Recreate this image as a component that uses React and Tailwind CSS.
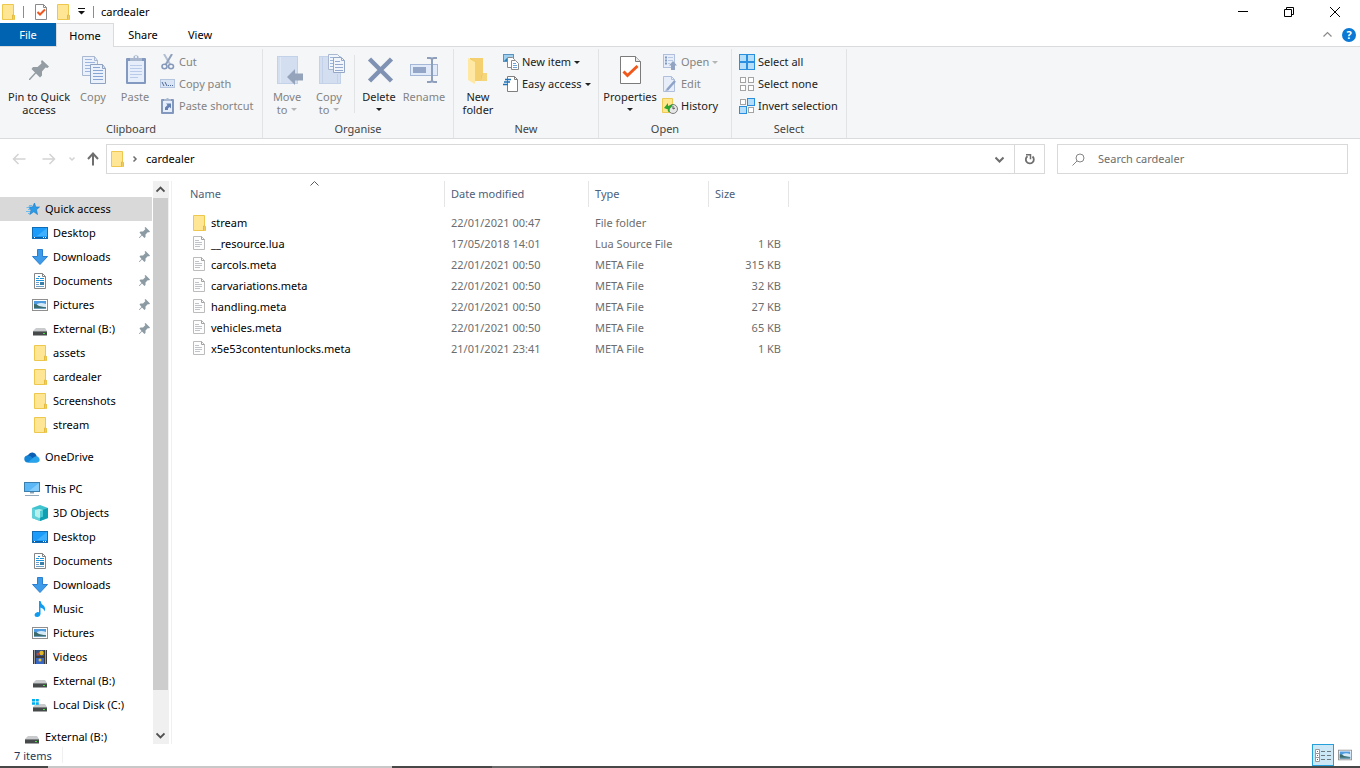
import { useState } from 'react';
import clsx from 'clsx';

/* ---------- icons ---------- */

const Svg = ({ size = 16, className, children }) => (
  <svg width={size} height={size} viewBox={`0 0 ${size} ${size}`} fill="none" aria-hidden="true" className={clsx('shrink-0', className)}>
    {children}
  </svg>
);

const FolderIcon = () => (
  <Svg>
    <path d="M2.500.5h11v11h1v4h-12z" fill="#ffe694" stroke="#edc84c" />
    <path d="M12.500 15.500v-4.500h1.500v4.500" fill="#ffe07a" stroke="#e3bb41" />
  </Svg>
);

const CheckDocIcon = () => (
  <Svg>
    <path d="M2.500.5h8l3 3v12h-11z" fill="#fff" stroke="#8a8a8a" />
    <path d="M10.500.5v3h3" stroke="#8a8a8a" />
    <path d="M4.500 8l2.500 2.500 5-5" stroke="#f0561d" strokeWidth="2" />
  </Svg>
);

const FileIcon = () => (
  <Svg>
    <path d="M2.500.5h8l3 3v10h-11z" fill="#fdfdfd" stroke="#bcbcbc" />
    <path d="M10.500.5v3h3" stroke="#a2a2a2" />
    <path d="M4 4.500h4M4 6.500h7M4 8.500h7M4 10.500h5" stroke="#c0c4c8" />
  </Svg>
);

const PinIcon = () => (
  <Svg size={32}>
    <path d="M19 6L26 12.500L24.500 14L22.500 13.500L19 17.500V21.500L17 23.500L13 19.500L7 26H6V25L12 18.500L8.500 15L10 13H14.500L18.500 9.500L18 7.500Z" fill="#939da3" />
  </Svg>
);

const SmallPinIcon = () => (
  <Svg className="text-[#8c9aa3]">
    <path d="M9.500 2L14 6.500L13 7.500L12 7L9.500 9.500V12L8.500 13L6 10.500L3.500 13H3V12.500L5.500 10L3.500 7.500L4.500 6.500H7L9.500 4L8.500 3Z" fill="currentColor" />
  </Svg>
);

const CopyIcon = () => (
  <Svg size={32}>
    <path d="M5.500 2.500h12l3 4v15h-15z" fill="#eaf1fb" stroke="#a9b8d0" />
    <path d="M17.500 2.500v4h3" stroke="#a9b8d0" />
    <path d="M8 5.500h7M8 8.500h10M8 11.500h5M8 14.500h5M8 17.500h5" stroke="#9db5dc" />
    <path d="M13.500 10.500h12l3 4v15h-15z" fill="#eaf1fb" stroke="#8fa2c2" />
    <path d="M25.500 10.500v4h3" stroke="#8fa2c2" />
    <path d="M16 13.500h7M16 16.500h10M16 19.500h10M16 22.500h10M16 25.500h10" stroke="#88a4d3" />
  </Svg>
);

const PasteIcon = () => (
  <Svg size={32}>
    <rect x="7" y="4" width="20" height="26" rx="1" fill="#8399c0" />
    <rect x="9" y="7" width="16" height="21" fill="#e6eefb" />
    <path d="M11 11.500h12M11 14.500h12M11 17.500h12M11 20.500h12M11 23.500h8" stroke="#b9cbe9" />
    <path d="M11 7V4h3.500V2.500Q17 0 19.500 2.500V4H23v3z" fill="#a9b7ce" />
    <rect x="16" y="2" width="2" height="2" fill="#e6eefb" />
  </Svg>
);

const MoveIcon = () => (
  <Svg size={32}>
    <rect x="6.500" y="2.500" width="20" height="27" fill="#d3dff0" stroke="#c3d2e8" />
    <path d="M9.500 3v26" stroke="#dfe8f5" />
    <path d="M16 23L24 15V19.500H32V26.500H24V31Z" fill="#95a3bb" />
  </Svg>
);

const CopyToIcon = () => (
  <Svg size={32}>
    <rect x="6.500" y="2.500" width="21" height="27" fill="#d3dff0" stroke="#c3d2e8" />
    <path d="M9.500 3v26M24.500 20v9" stroke="#c3d2e8" />
    <path d="M15.500.5h9l3 3v12h-12z" fill="#f1f6fd" stroke="#a9b8d0" />
    <path d="M17 3.500h6M17 6.500h3M17 9.500h3M17 12.500h3" stroke="#9db5dc" />
    <path d="M20.500 3.500h8l3 3v12h-11z" fill="#f1f6fd" stroke="#95a7c5" />
    <path d="M28.500 3.500v3h3M22 7.500h5M22 10.500h8M22 13.500h8M22 16.500h8" stroke="#95aace" />
  </Svg>
);

const DeleteIcon = () => (
  <Svg size={32}>
    <path d="M6.500 5L28.500 27M28.500 5L6.500 27" stroke="#8092b3" strokeWidth="4.500" />
  </Svg>
);

const RenameIcon = () => (
  <Svg size={32}>
    <rect x="2.500" y="10.500" width="27" height="11" fill="#e1eaf8" stroke="#a5b7d6" />
    <rect x="5" y="13" width="13" height="6" fill="#93a6c8" />
    <path d="M19 4h3q2 0 2 2v20q0 2-2 2h-3M29 4h-3q-2 0-2 2M29 28h-3q-2 0-2-2" stroke="#8e9fbc" strokeWidth="2" />
  </Svg>
);

const NewFolderIcon = () => (
  <Svg size={32}>
    <path d="M8 4H21V19H25V27H8Z" fill="#f0c75f" />
    <path d="M21 19h4v8h-6z" fill="#f6d67b" />
    <path d="M8 4h13v15l-2 3v5h-6V8z" fill="#f5d070" />
    <path d="M6 4L13 8V30L6 26Z" fill="#ffe8a3" />
  </Svg>
);

const PropertiesIcon = () => (
  <Svg size={32}>
    <path d="M6.500 2.500h15l5 5v22h-20z" fill="#fff" stroke="#7b7b7b" />
    <path d="M21.500 2.500v5h5" fill="#e8e8e8" stroke="#7b7b7b" />
    <path d="M9.500 17.500L13.500 21.500L23.500 12" stroke="#f0591b" strokeWidth="3" />
  </Svg>
);

const CutIcon = () => (
  <Svg>
    <path d="M4 0L10.500 11" stroke="#b3bfd2" strokeWidth="2" />
    <path d="M12 0L5.500 11" stroke="#8fa0bd" strokeWidth="2" />
    <ellipse cx="4.500" cy="12.500" rx="2.500" ry="2.200" stroke="#8699bb" strokeWidth="1.600" />
    <ellipse cx="11" cy="12.500" rx="2.500" ry="2.200" stroke="#8699bb" strokeWidth="1.600" />
  </Svg>
);

const CopyPathIcon = () => (
  <Svg>
    <rect x=".5" y="3.500" width="14" height="8" fill="#d9e4f4" stroke="#b5c5df" />
    <path d="M2 6l2 4M5 6l2 4" stroke="#4f6999" />
    <path d="M8 9.500h1M10 9.500h1M12 9.500h1" stroke="#4f6999" />
  </Svg>
);

const ShortcutIcon = () => (
  <Svg>
    <rect x="1" y="1" width="13" height="15" rx="1" fill="#8298bf" />
    <rect x="3" y="3" width="9" height="11" fill="#e6eefb" />
    <path d="M4 3V1h2q1.500-2 3 0h2v2z" fill="#a9b7ce" />
    <path d="M5 12V9.500l2.500-2.500L6 5.500h5v5L9.500 9L8 10.500V12z" fill="#6580b3" />
  </Svg>
);

const NewItemIcon = () => (
  <Svg>
    <rect x=".5" y=".5" width="10" height="7" fill="#9fd0f0" stroke="#5b93bd" />
    <path d="M1 7l3-3 3 3z" fill="#2f7db5" />
    <path d="M4.500 3.500h5l2 2v8h-7z" fill="#fff" stroke="#8a8a8a" />
    <path d="M8.500 6.500h4l3 3v6h-7z" fill="#fff" stroke="#8a8a8a" />
    <path d="M10 9.500h3M10 11.500h4M10 13.500h4" stroke="#6da3d6" />
  </Svg>
);

const EasyAccessIcon = () => (
  <Svg>
    <path d="M4.500.5h7l3 3v12h-10V.5" fill="#fff" stroke="#7f7f7f" />
    <path d="M11.500.5v3h3" stroke="#7f7f7f" />
    <path d="M2 3.500h6M1 6h6M0 8.500h5" stroke="#1f71b8" strokeWidth="1.500" />
  </Svg>
);

const OpenIcon = () => (
  <Svg>
    <rect x="1.500" y=".5" width="11" height="13" fill="#e7eefa" stroke="#b0c0dc" />
    <path d="M3 3.500h2M3 6.500h2M3 9.500h2" stroke="#7f98c4" strokeWidth="2" />
    <path d="M6 3.500h5M6 6.500h5M6 9.500h2" stroke="#b9c9e4" />
    <path d="M11 7L15 11.500H13V16H9V11.500H7Z" fill="#92a4c2" />
  </Svg>
);

const EditIcon = () => (
  <Svg>
    <path d="M1.500.5h8l3 3v12h-11z" fill="#e7eefa" stroke="#b0c0dc" />
    <path d="M9.500.5v3h3" stroke="#b0c0dc" />
    <path d="M5 14L13 5" stroke="#8da2c6" strokeWidth="2.500" />
    <path d="M3 16l1-3 2 2z" fill="#a9b9d4" />
  </Svg>
);

const HistoryIcon = () => (
  <Svg>
    <path d="M.5.500h10v14H.5z" fill="#ffe68f" stroke="#edcb55" />
    <circle cx="11" cy="11" r="4.500" fill="#e6e6e6" stroke="#7d7d7d" />
    <path d="M11 8v3l2-1" stroke="#555" />
    <path d="M2 10l4-5v3q3-1 5-2-1 3-3 4.500-1 1.500 0 4-3-1-2-3z" fill="#2da52d" />
  </Svg>
);

const Square = ({ x, y, on }) => (
  <rect x={x + 0.5} y={y + 0.5} width={on ? 7 : 5} height={on ? 7 : 5} fill={on ? '#b5defa' : '#fff'} stroke={on ? '#2b8fe0' : '#a3a3a3'} />
);

const SelectAllIcon = () => (
  <Svg>
    <Square x={0} y={0} on /><Square x={8} y={0} on />
    <Square x={0} y={8} on /><Square x={8} y={8} on />
    <path d="M8 0v16M0 8h16" stroke="#2b8fe0" strokeWidth="2" />
  </Svg>
);

const SelectNoneIcon = () => (
  <Svg>
    <Square x={1} y={1} /><Square x={9} y={1} />
    <Square x={1} y={9} /><Square x={9} y={9} />
  </Svg>
);

const InvertIcon = () => (
  <Svg>
    <Square x={1} y={1} /><Square x={8} y={0} on />
    <Square x={0} y={8} on /><Square x={9} y={9} />
  </Svg>
);

const StarIcon = () => (
  <Svg>
    <path d="M10.500 2L11.800 6H15.500L12.500 8.700L13.500 13.500L9.800 10.800L5.800 13.500L7 9L4.500 6H8.500Z" fill="#2b9be8" stroke="#1a78c2" strokeWidth=".6" />
    <path d="M5 4.500h3M2.500 6.500h3M4 8.500h2M2 10.500h4M4 12.500h2" stroke="#6cbcf0" />
  </Svg>
);

const DesktopIcon = () => (
  <Svg>
    <rect x=".5" y="2.500" width="15" height="11" fill="#1b9cfb" stroke="#0f6db8" />
    <path d="M15 3v8L5 11z" fill="#3eb0ff" />
    <path d="M1 12.500h14" stroke="#0a5ea3" />
    <path d="M2 12.500h1M11 12.500h1M13 12.500h1" stroke="#fff" />
  </Svg>
);

const DownloadIcon = () => (
  <Svg>
    <path d="M5.500.5h5v7h5L8 15.500.5 7.500h5z" fill="#3d9be9" stroke="#2b7fd0" />
  </Svg>
);

const DocumentIcon = () => (
  <Svg>
    <path d="M2.500.5h8l3 3v12h-11z" fill="#fff" stroke="#858585" />
    <path d="M10.500.5v3h3" stroke="#858585" />
    <path d="M4 5.500h3M6 3.500h2M8 5.500h4M4 7.500h8" stroke="#1d94dc" />
    <path d="M4 9.500h3M4 11.500h3M4 13.500h8" stroke="#6b9fc8" />
    <rect x="8" y="9" width="4" height="3" fill="#3d7ea8" />
  </Svg>
);

const PictureIcon = ({ size }) => (
  <svg width={size || 16} height={size || 16} viewBox="0 0 16 16" fill="none" aria-hidden="true" className="shrink-0">
    <rect x=".5" y="2.500" width="15" height="11" fill="#fff" stroke="#8f8f8f" />
    <rect x="2" y="4" width="12" height="8" fill="#4f9be0" />
    <path d="M5 7q4-2 9 0v3H5z" fill="#d5e9f7" />
    <path d="M2 7q3 0 5 2l7 1.500V12H2z" fill="#3b6b6c" />
    <path d="M2 11h12v1H2z" fill="#6ea0bd" />
  </svg>
);

const Disk = () => (
  <>
    <path d="M4 7h9l2 3H1z" fill="#c9cbcc" />
    <path d="M1 10h14v4.500H1z" fill="#474a4b" />
    <path d="M1 10.500h14" stroke="#7f8283" />
    <rect x="11" y="12" width="2" height="1" fill="#44e044" />
  </>
);

const DriveIcon = () => <Svg><Disk /></Svg>;

const LocalDiskIcon = () => (
  <Svg>
    <Disk />
    <path d="M0 2h3v2.500H0zM3.800 2h3v2.500h-3zM0 5.300h3v2.500H0zM3.800 5.300h3v2.500h-3z" fill="#00adef" />
  </Svg>
);

const CloudIcon = () => (
  <Svg>
    <path d="M4 12a4 4 0 0 1 .5-6.500A4.500 4.500 0 0 1 12.500 6.500L13 13z" fill="#0a5fb4" />
    <path d="M3.500 13.500A3.500 3.500 0 0 1 3 6.600Q6 6 8 8.500L13 13.500z" fill="#1485d6" />
    <path d="M4 13.500L10 8Q14 6 15 9q2 3-1.500 4.500z" fill="#27a4ec" />
  </Svg>
);

const PcIcon = () => (
  <Svg>
    <rect x=".5" y="1.500" width="15" height="9" fill="#5bb7f5" stroke="#3a7fae" />
    <path d="M15 2v8H5z" fill="#83ccfb" />
    <path d="M6 11h4v1.500H6z" fill="#8fa4b2" />
    <path d="M1 14.500h14" stroke="#93a9ba" />
  </Svg>
);

const CubeIcon = () => (
  <Svg>
    <path d="M0 3L8 0l8 3v10l-8 3-8-3z" fill="#3fc3cf" />
    <path d="M0 3l8 3v10l-8-3z" fill="#62d0d8" />
    <path d="M16 3L8 6v10l8-3z" fill="#0f9fb3" />
    <path d="M3 5l4-1 4 1v6l-4 2-4-2z" fill="#b9f0ee" />
    <path d="M8 6l3-1v6.500l-3 1z" fill="#49ccd5" />
  </Svg>
);

const MusicIcon = () => (
  <Svg>
    <path d="M7 0h1.500q.5 3 3 4.500 2.500 2.500 1 6-.5-3-4-4V13q-.5 3-3.500 3-2.500 0-2.500-2t3-3q1 0 1.500.3z" fill="#0f9bef" />
  </Svg>
);

const VideoIcon = () => (
  <Svg>
    <rect x="1" y="1" width="14" height="14" fill="#3a3a3a" />
    <path d="M2.500 1.500v13M13.500 1.500v13" stroke="#fff" strokeDasharray="1 1" />
    <rect x="4" y="1" width="8" height="6" fill="#37507e" />
    <rect x="4" y="9" width="8" height="6" fill="#3767c4" />
    <circle cx="9.500" cy="4" r="2.200" fill="#e0b92b" />
    <circle cx="6" cy="5" r="1.500" fill="#c0472f" />
    <circle cx="8" cy="11" r="1.500" fill="#e8c53a" />
  </Svg>
);

const DetailsIcon = () => (
  <Svg>
    <path d="M.5 2.500h4v12h-4zM0 6.500h5M0 10.500h5" fill="#fff" stroke="#9a9a9a" />
    <path d="M2 4.500h1" stroke="#2f9b3f" />
    <path d="M2 8.500h1" stroke="#2f6fd0" />
    <path d="M2 12.500h1" stroke="#c8322b" />
    <path d="M6 4.500h4M12 4.500h4M6 8.500h4M12 8.500h4M6 12.500h4M12 12.500h4" stroke="#6f7a80" />
  </Svg>
);

const Caret = ({ className }) => (
  <svg width="6" height="3" viewBox="0 0 6 3" aria-hidden="true" className={clsx('shrink-0', className)}>
    <path d="M0 0h6L3 3z" fill="currentColor" />
  </svg>
);

const Chevron = ({ d, className, width = 1.5 }) => (
  <svg width="9" height="9" viewBox="0 0 9 9" fill="none" aria-hidden="true" className={clsx('shrink-0', className)}>
    <path d={d} stroke="currentColor" strokeWidth={width} />
  </svg>
);

const UP = 'M.5 6.500l4-4 4 4';
const DOWN = 'M.5 2.500l4 4 4-4';

/* ---------- ribbon ---------- */

const Group = ({ label, className, children }) => (
  <section className={clsx('mt-0.5 flex shrink-0 flex-col border-r border-[#e2e3e4] pt-0.5 pb-px', className)}>
    <div className="flex h-[66px] pl-[3px]">{children}</div>
    <h2 className="mt-1 h-4 text-center leading-4 text-[#444]">{label}</h2>
  </section>
);

const BigButton = ({ icon: Icon, lines, caret, disabled, className }) => (
  <button disabled={disabled} className={clsx('flex flex-col items-center pt-[3px] leading-[13px] whitespace-nowrap', disabled ? 'text-[#838383]' : 'text-[#222]', className)}>
    <Icon />
    <span className="mt-1">{lines[0]}</span>
    {(lines[1] || caret) && (
      <span className="flex h-[13px] items-center gap-1">
        {lines[1]}
        {caret && <Caret className={disabled && 'text-[#b5b5b5]'} />}
      </span>
    )}
  </button>
);

const SmallButton = ({ icon: Icon, label, caret, disabled }) => (
  <button disabled={disabled} className={clsx('flex h-[22px] items-center gap-[3px] whitespace-nowrap', disabled ? 'text-[#838383]' : 'text-[#222]')}>
    <Icon />
    {label}
    {caret && <Caret className={disabled && 'text-[#b5b5b5]'} />}
  </button>
);

const Ribbon = () => (
  <div className="flex border-b border-[#dadbdc] bg-[#f5f6f7]">
    <Group label="Clipboard" className="w-[263px]">
      <BigButton icon={PinIcon} lines={['Pin to Quick', 'access']} className="w-18" />
      <BigButton icon={CopyIcon} lines={['Copy']} disabled className="w-9" />
      <BigButton icon={PasteIcon} lines={['Paste']} disabled className="w-12" />
      <div className="ml-px">
        <SmallButton icon={CutIcon} label="Cut" disabled />
        <SmallButton icon={CopyPathIcon} label="Copy path" disabled />
        <SmallButton icon={ShortcutIcon} label="Paste shortcut" disabled />
      </div>
    </Group>
    <Group label="Organise" className="w-[191px]">
      <BigButton icon={MoveIcon} lines={['Move', 'to']} caret disabled className="w-[42px]" />
      <BigButton icon={CopyToIcon} lines={['Copy', 'to']} caret disabled className="w-[42px]" />
      <div className="my-1 mr-[3px] ml-1 border-l border-[#e2e3e4]" />
      <BigButton icon={DeleteIcon} lines={['Delete']} caret className="w-[42px]" />
      <BigButton icon={RenameIcon} lines={['Rename']} disabled className="w-12" />
    </Group>
    <Group label="New" className="w-[145px]">
      <BigButton icon={NewFolderIcon} lines={['New', 'folder']} className="w-[42px]" />
      <div className="ml-1">
        <SmallButton icon={NewItemIcon} label="New item" caret />
        <SmallButton icon={EasyAccessIcon} label="Easy access" caret />
      </div>
    </Group>
    <Group label="Open" className="w-[133px]">
      <BigButton icon={PropertiesIcon} lines={['Properties']} caret className="w-14" />
      <div className="ml-1">
        <SmallButton icon={OpenIcon} label="Open" caret disabled />
        <SmallButton icon={EditIcon} label="Edit" disabled />
        <SmallButton icon={HistoryIcon} label="History" />
      </div>
    </Group>
    <Group label="Select" className="w-[115px]">
      <div className="ml-1">
        <SmallButton icon={SelectAllIcon} label="Select all" />
        <SmallButton icon={SelectNoneIcon} label="Select none" />
        <SmallButton icon={InvertIcon} label="Invert selection" />
      </div>
    </Group>
  </div>
);

/* ---------- navigation pane ---------- */

const TREE = [
  {
    label: 'Quick access', icon: StarIcon,
    items: [
      { label: 'Desktop', icon: DesktopIcon, pinned: true },
      { label: 'Downloads', icon: DownloadIcon, pinned: true },
      { label: 'Documents', icon: DocumentIcon, pinned: true },
      { label: 'Pictures', icon: PictureIcon, pinned: true },
      { label: 'External (B:)', icon: DriveIcon, pinned: true },
      { label: 'assets', icon: FolderIcon },
      { label: 'cardealer', icon: FolderIcon },
      { label: 'Screenshots', icon: FolderIcon },
      { label: 'stream', icon: FolderIcon },
    ],
  },
  { label: 'OneDrive', icon: CloudIcon, items: [] },
  {
    label: 'This PC', icon: PcIcon,
    items: [
      { label: '3D Objects', icon: CubeIcon },
      { label: 'Desktop', icon: DesktopIcon },
      { label: 'Documents', icon: DocumentIcon },
      { label: 'Downloads', icon: DownloadIcon },
      { label: 'Music', icon: MusicIcon },
      { label: 'Pictures', icon: PictureIcon },
      { label: 'Videos', icon: VideoIcon },
      { label: 'External (B:)', icon: DriveIcon },
      { label: 'Local Disk (C:)', icon: LocalDiskIcon },
    ],
  },
  { label: 'External (B:)', icon: DriveIcon, items: [] },
];

const NavItem = ({ item, child, selected, onClick }) => {
  const Icon = item.icon;
  return (
    <button
      onClick={onClick}
      className={clsx('flex h-6 w-full shrink-0 items-center gap-[5px] whitespace-nowrap', child ? 'pl-8' : 'pl-6', selected && 'bg-[#d9d9d9]')}
    >
      <Icon />
      <span className="flex-1 text-left">{item.label}</span>
      {item.pinned && <SmallPinIcon />}
    </button>
  );
};

const NavPane = () => {
  const [selected, setSelected] = useState('Quick access');

  return (
    <nav className="flex w-[172px] shrink-0 border-r border-[#f0f0f0]">
      <div className="flex w-[153px] flex-col gap-2 overflow-hidden pt-4 pr-px">
        {TREE.map(root => (
          <div key={root.label} className="shrink-0">
            <NavItem item={root} selected={selected === root.label} onClick={() => setSelected(root.label)} />
            {root.items.map(item => (
              <NavItem
                key={item.label}
                item={item}
                child
                selected={selected === `${root.label}/${item.label}`}
                onClick={() => setSelected(`${root.label}/${item.label}`)}
              />
            ))}
          </div>
        ))}
      </div>
      <div className="flex w-4 flex-col bg-[#f0f0f0] pr-px text-[#505050]">
        <button aria-label="Scroll up" className="flex h-[17px] items-center justify-center"><Chevron d={UP} width={1.8} /></button>
        <div className="flex flex-1 flex-col">
          <div className="h-[93%] bg-[#cdcdcd]" />
        </div>
        <button aria-label="Scroll down" className="flex h-[17px] items-center justify-center"><Chevron d={DOWN} width={1.8} /></button>
      </div>
    </nav>
  );
};

/* ---------- file list ---------- */

const FILES = [
  { name: 'stream', date: '22/01/2021 00:47', type: 'File folder', size: '', folder: true },
  { name: '__resource.lua', date: '17/05/2018 14:01', type: 'Lua Source File', size: '1 KB' },
  { name: 'carcols.meta', date: '22/01/2021 00:50', type: 'META File', size: '315 KB' },
  { name: 'carvariations.meta', date: '22/01/2021 00:50', type: 'META File', size: '32 KB' },
  { name: 'handling.meta', date: '22/01/2021 00:50', type: 'META File', size: '27 KB' },
  { name: 'vehicles.meta', date: '22/01/2021 00:50', type: 'META File', size: '65 KB' },
  { name: 'x5e53contentunlocks.meta', date: '21/01/2021 23:41', type: 'META File', size: '1 KB' },
];

const FileList = () => (
  <main className="flex-1 overflow-hidden">
    <table className="w-[617px] table-fixed border-separate border-spacing-0">
      <thead>
        <tr className="h-[26px] text-left text-[#4c607a] *:border-r *:border-[#e5e5e5] *:p-0 *:font-normal">
          <th className="relative w-[273px]">
            <span className="pl-[18px]">Name</span>
            <Chevron d={UP} width={1} className="absolute -top-0.5 left-[138px] text-[#5a5a5a]" />
          </th>
          <th className="w-36"><span className="pl-1.5">Date modified</span></th>
          <th className="w-30"><span className="pl-1.5">Type</span></th>
          <th className="w-20"><span className="pl-1.5">Size</span></th>
        </tr>
      </thead>
      <tbody className="text-[#6d6d6d] before:block before:h-[5px]">
        {FILES.map(file => (
          <tr key={file.name} className="h-[21px] *:py-0">
            <td className="pr-0 pl-[19px]">
              <span className="flex items-center gap-1 text-black">
                {file.folder ? <FolderIcon /> : <FileIcon />}
                {file.name}
              </span>
            </td>
            <td className="pr-0 pl-1.5">{file.date}</td>
            <td className="pr-0 pl-1.5">{file.type}</td>
            <td className="pr-2 pl-0 text-right">{file.size}</td>
          </tr>
        ))}
      </tbody>
    </table>
  </main>
);

/* ---------- window ---------- */

const TitleBar = () => (
  <header className="flex h-[23px] items-center">
    <FolderIcon />
    <div className="mx-[7px] h-3 border-l border-[#8c8c8c]" />
    <button aria-label="Properties" className="ml-[2px]"><CheckDocIcon /></button>
    <button aria-label="New folder" className="ml-[6px]"><FolderIcon /></button>
    <button aria-label="Customise Quick Access Toolbar" className="ml-[7px]">
      <svg width="7" height="7" viewBox="0 0 7 7" aria-hidden="true"><path d="M0 0h7v1H0zM0 3h7L3.500 6.500z" fill="#111" /></svg>
    </button>
    <div className="mr-[7px] ml-2 h-3 border-l border-[#8c8c8c]" />
    <h1 className="flex-1">cardealer</h1>
    <div className="flex pr-0.5 *:flex *:h-[22px] *:w-[46px] *:items-center *:justify-center">
      <button aria-label="Minimise">
        <Svg size={12}><path d="M1 5.500h10" stroke="#000" /></Svg>
      </button>
      <button aria-label="Restore">
        <Svg size={12}><path d="M1.500 3.500h7v7h-7zM3.500 3.500v-2h7v7h-2" stroke="#000" /></Svg>
      </button>
      <button aria-label="Close">
        <Svg size={12}><path d="M1 1l10 10M11 1L1 11" stroke="#000" /></Svg>
      </button>
    </div>
  </header>
);

const Tabs = () => (
  <div className="flex h-6 items-stretch border-b border-[#dadbdc]">
    <button className="w-14 bg-[#0063b1] text-white">File</button>
    <button className="-mb-px w-[58px] border border-b-0 border-[#dadbdc] bg-[#f5f6f7]">Home</button>
    <button className="w-[58px]">Share</button>
    <button className="w-14">View</button>
    <div className="ml-auto flex items-center gap-2.5 pr-1">
      <button aria-label="Minimise the Ribbon" className="text-[#8a8a8a]"><Chevron d={UP} width={1.2} /></button>
      <button aria-label="Help" className="flex size-[14px] items-center justify-center rounded-full bg-[#0a78d4] leading-none font-bold text-white">?</button>
    </div>
  </div>
);

const AddressBar = () => (
  <div className="flex items-stretch pt-[5px] pr-3 pb-[7px] pl-3">
    <div className="flex w-[94px] items-center text-[#d3d3d3]">
      <button aria-label="Back">
        <Svg size={14}><path d="M1.500 7h12M6.500 2L1.500 7l5 5" stroke="currentColor" strokeWidth="1.500" /></Svg>
      </button>
      <button aria-label="Forward" className="ml-4">
        <Svg size={14}><path d="M.5 7h12M7.500 2l5 5-5 5" stroke="currentColor" strokeWidth="1.500" /></Svg>
      </button>
      <button aria-label="Recent locations" className="ml-3">
        <Svg size={8}><path d="M1.500 2.500L4 5l2.500-2.500" stroke="currentColor" strokeWidth="1.500" /></Svg>
      </button>
      <button aria-label="Up" className="ml-[10px] text-[#6e6e6e]">
        <Svg size={14}><path d="M7 13.500V2M2 7l5-5.500L12 7" stroke="currentColor" strokeWidth="2" /></Svg>
      </button>
    </div>
    <div className="flex h-[30px] flex-1 items-center border border-[#d9d9d9]">
      <span className="ml-[2px] flex"><FolderIcon /></span>
      <Svg size={8} className="ml-[6px] text-[#6e6e6e]"><path d="M2.500 1.500L5 4 2.500 6.500" stroke="currentColor" strokeWidth="1.500" /></Svg>
      <button className="ml-[7px]">cardealer</button>
      <button aria-label="Previous locations" className="mr-[10px] ml-auto text-[#6e6e6e]"><Chevron d={DOWN} width={2} /></button>
      <button aria-label="Refresh" className="flex w-[30px] items-center justify-center self-stretch border-l border-[#d9d9d9] text-[#6e6e6e]">
        <Svg size={12}>
          <path d="M8.500 3.500A4 4 0 1 1 3.500 3.200" stroke="currentColor" strokeWidth="1.800" />
          <path d="M2 1.800h4.500v4.500" stroke="currentColor" strokeWidth="1.500" />
        </Svg>
      </button>
    </div>
    <label className="ml-3 flex h-[30px] w-[291px] items-center border border-[#d9d9d9] pl-[14px]">
      <Svg size={13} className="text-[#858585]">
        <circle cx="8" cy="5" r="4" stroke="currentColor" />
        <path d="M5 8L.5 12.500" stroke="currentColor" />
      </Svg>
      <input type="search" aria-label="Search cardealer" placeholder="Search cardealer" className="ml-[13px] min-w-0 flex-1 outline-none placeholder:text-[#6d6d6d]" />
    </label>
  </div>
);

const StatusBar = () => (
  <footer className="flex h-[22px] items-center text-[#1e395b]">
    <span className="w-[62px] pt-0.5 pl-[14px]">7 items</span>
    <div className="h-4 border-l border-[#f0f0f0]" />
    <div className="ml-auto flex h-full items-center pr-2">
      <button aria-label="Details" aria-pressed="true" className="flex h-full w-[22px] items-center justify-center border border-[#26a0da] bg-[#cce8f6]"><DetailsIcon /></button>
      <button aria-label="Large icons" className="ml-1"><PictureIcon size={14} /></button>
    </div>
  </footer>
);

const App = () => (
  <div className="flex h-screen flex-col overflow-hidden bg-white font-['Noto_Sans','Open_Sans',sans-serif] text-[11px] leading-4 text-black">
    <TitleBar />
    <Tabs />
    <Ribbon />
    <AddressBar />
    <div className="flex min-h-0 flex-1">
      <NavPane />
      <FileList />
    </div>
    <StatusBar />
    {/* top edge of the taskbar */}
    <div className="flex h-0.5 shrink-0 bg-[#484848]">
      <div className="ml-12 w-[344px] bg-[#c8c8c8]" />
      <div className="ml-[100px] w-12 bg-[#6a6a6a]" />
    </div>
  </div>
);

export default App;
